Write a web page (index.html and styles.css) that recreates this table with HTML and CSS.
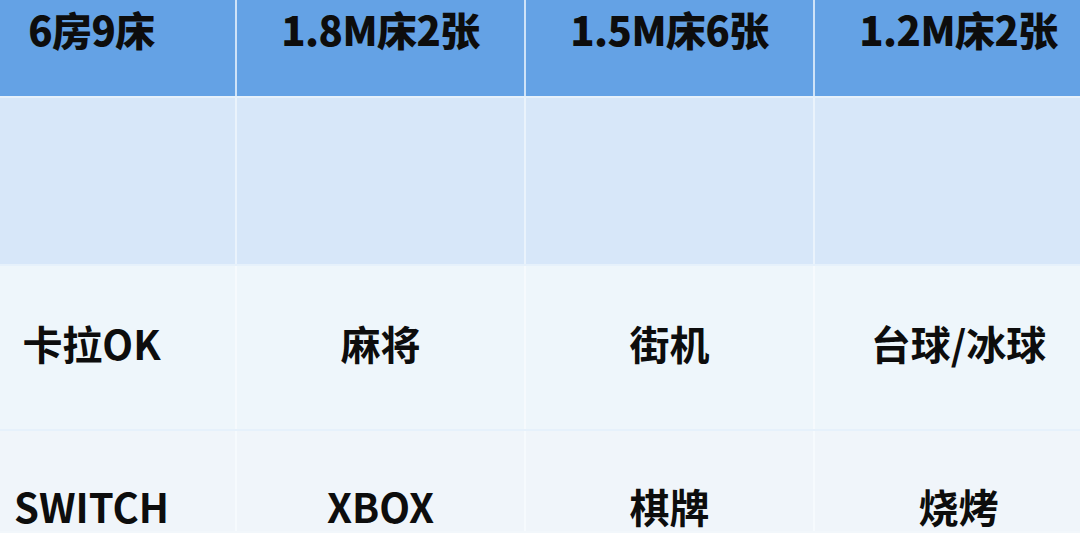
FILE: index.html
```html
<!DOCTYPE html>
<html lang="zh-CN">
<head>
<meta charset="utf-8">
<title>配置表</title>
<link rel="stylesheet" href="styles.css">
</head>
<body>
<div class="table">
  <div class="row head">
    <div class="cell">6房9床</div>
    <div class="cell">1.8M床2张</div>
    <div class="cell">1.5M床6张</div>
    <div class="cell">1.2M床2张</div>
  </div>
  <div class="row blank">
    <div class="cell"></div>
    <div class="cell"></div>
    <div class="cell"></div>
    <div class="cell"></div>
  </div>
  <div class="row light">
    <div class="cell">卡拉OK</div>
    <div class="cell">麻将</div>
    <div class="cell">街机</div>
    <div class="cell">台球/冰球</div>
  </div>
  <div class="row light last">
    <div class="cell">SWITCH</div>
    <div class="cell">XBOX</div>
    <div class="cell">棋牌</div>
    <div class="cell">烧烤</div>
  </div>
</div>
</body>
</html>
```

FILE: styles.css
```css
html, body {
  margin: 0;
  padding: 0;
  width: 1080px;
  height: 533px;
  overflow: hidden;
  background: #f2f7fb;
}

.table {
  margin-left: -52px;
  width: 1160px;
  display: flex;
  flex-direction: column;
  gap: 2px;
  background: #e6f1fb;
  font-family: "Noto Sans CJK SC", "Noto Sans", sans-serif;
  font-weight: 700;
  color: #0d0d0d;
  font-size: 40px;
  line-height: 50px;
}

.row {
  display: grid;
  grid-template-columns: repeat(4, 287px);
  column-gap: 2px;
}

.cell {
  display: flex;
  justify-content: center;
  white-space: nowrap;
}

.head {
  background: #cfe3f8;
  height: 96px;
}
.head .cell {
  background: #64a2e5;
  align-items: flex-start;
  padding-top: 4px;
  letter-spacing: -0.5px;
  font-weight: 800;
}

.blank {
  background: #eaf3fc;
  height: 166px;
}
.blank .cell {
  background: #d7e7f9;
}

.light {
  background: #f6fafd;
}
.light .cell {
  background: #eef6fb;
  align-items: center;
  height: 163px;
  padding-bottom: 10px;
  box-sizing: border-box;
}

.last .cell {
  background: #f0f5fa;
  align-items: flex-start;
  padding-top: 50px;
  padding-bottom: 0;
  height: 100px;
}
```
